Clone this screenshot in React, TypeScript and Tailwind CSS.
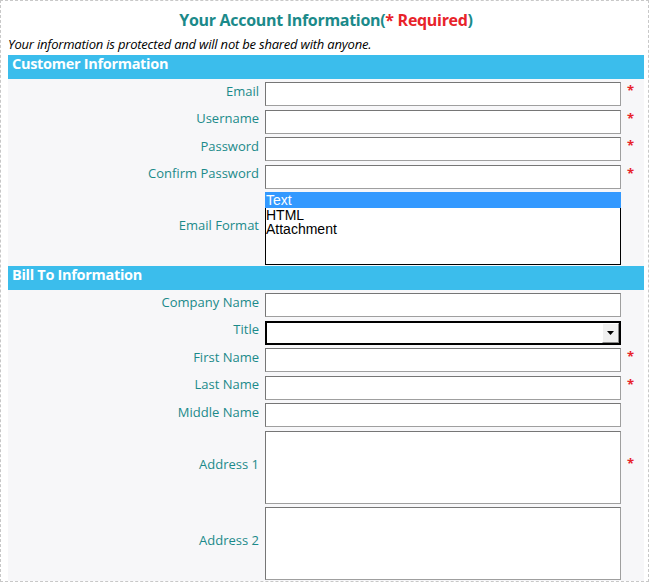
const font = { fontFamily: '"Open Sans", "Noto Sans", sans-serif' };

function Star() {
  return <span className="pb-[8px] pl-[1px] text-[13px] font-bold leading-[16px] text-[#e8232a]">*</span>;
}

function Label({ children }: { children: React.ReactNode }) {
  return (
    <div className="flex justify-end pb-[7px] pr-px text-[13px] leading-[16px] text-[#1b8a8a]">{children}</div>
  );
}

function TextBox({ h = "h-[24px]" }: { h?: string }) {
  return (
    <div
      className={`${h} w-[356px] border border-t-[#767676] border-l-[#767676] border-r-[#9f9f9f] border-b-[#9f9f9f] bg-white`}
    />
  );
}

function Row({
  label,
  required,
  children,
}: {
  label: string;
  required?: boolean;
  children: React.ReactNode;
}) {
  return (
    <div className="grid grid-cols-[252px_356px_1fr] items-center gap-x-[5px]">
      <Label>{label}</Label>
      {children}
      <div className="flex items-center">{required && <Star />}</div>
    </div>
  );
}

function Bar({ title }: { title: string }) {
  return (
    <div className="h-[24px] bg-[#3bbdec] pl-[4px] text-[14.5px] font-bold leading-[17px] tracking-[-0.3px] text-white">
      {title}
    </div>
  );
}

function ListBox() {
  const arial = { fontFamily: '"Liberation Sans", Arial, sans-serif' };
  return (
    <div className="h-[73px] w-[356px] border border-black bg-white text-[14px] text-black" style={arial}>
      <div className="-mx-px -mt-px h-[16px] bg-[#3399ff] pl-px leading-[16px] text-white">Text</div>
      <div className="leading-[14px]">HTML</div>
      <div className="leading-[14px]">Attachment</div>
    </div>
  );
}

function SelectBox() {
  return (
    <div className="flex h-[24px] w-[356px] items-stretch justify-end border-2 border-black bg-white">
      <div className="flex w-[17px] items-center justify-center border border-t-white border-l-white border-r-[#8a8a8a] border-b-[#8a8a8a] bg-[#f0f0f0]">
        <svg width="7" height="4" viewBox="0 0 7 4">
          <path d="M0 0h7L3.5 4z" fill="#000" />
        </svg>
      </div>
    </div>
  );
}

export default function App() {
  return (
    <div
      className="h-[582px] w-[649px] overflow-hidden border border-dashed border-[#c8c8c8] bg-white pl-[7px] pr-[4px]"
      style={font}
    >
      <div className="pb-[5px] pt-[8px] text-center text-[16px] font-bold leading-[22px] tracking-[-0.3px] text-[#1b8a8a]">
        Your Account Information(<span className="text-[#e8232a]">* Required</span>)
      </div>
      <div className="text-[13px] italic leading-[16px] tracking-[-0.2px] text-black">
        Your information is protected and will not be shared with anyone.
      </div>
      <div className="mt-[3px]">
        <Bar title="Customer Information" />
        <div className="flex flex-col gap-y-[3.5px] bg-[#f7f7f9] pb-px pt-[3px]">
          <Row label="Email" required>
            <TextBox />
          </Row>
          <Row label="Username" required>
            <TextBox />
          </Row>
          <Row label="Password" required>
            <TextBox />
          </Row>
          <Row label="Confirm Password" required>
            <TextBox />
          </Row>
          <Row label="Email Format">
            <ListBox />
          </Row>
        </div>
        <Bar title="Bill To Information" />
        <div className="flex flex-col gap-y-[3.5px] bg-[#f7f7f9] pb-[4px] pt-[3px]">
          <Row label="Company Name">
            <TextBox />
          </Row>
          <Row label="Title">
            <SelectBox />
          </Row>
          <Row label="First Name" required>
            <TextBox />
          </Row>
          <Row label="Last Name" required>
            <TextBox />
          </Row>
          <Row label="Middle Name">
            <TextBox />
          </Row>
          <Row label="Address 1" required>
            <TextBox h="h-[73px]" />
          </Row>
          <Row label="Address 2">
            <TextBox h="h-[73px]" />
          </Row>
        </div>
      </div>
    </div>
  );
}
